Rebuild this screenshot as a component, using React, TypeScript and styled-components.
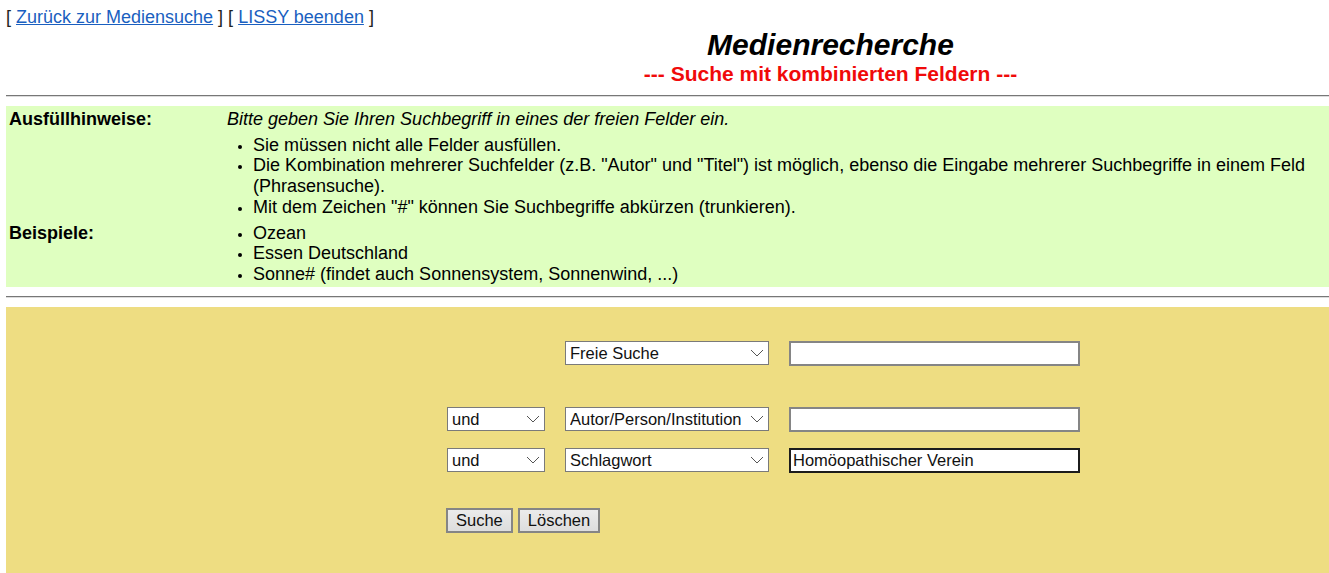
import React from "react";
import styled, { createGlobalStyle } from "styled-components";

const Global = createGlobalStyle`
  html, body { background: #ffffff; }
  body {
    margin: 7px 0 0 6px;
    font-family: "Liberation Sans", Arial, sans-serif;
    font-size: 18px;
    color: #000;
  }
`;

const Page = styled.div`
  display: flex;
  flex-direction: column;
`;

const TopLinks = styled.div`
  line-height: 21px;
  color: #222;
`;

const Link = styled.a`
  color: #1a5fc0;
  text-decoration: underline;
`;

const TitleBlock = styled.div`
  margin-left: 326px;
  text-align: center;
  display: flex;
  flex-direction: column;
  align-items: center;
`;

const Title = styled.h1`
  margin: 0;
  font-size: 30px;
  font-weight: bold;
  font-style: italic;
  line-height: 34px;
`;

const Subtitle = styled.h2`
  margin: 0;
  font-size: 21px;
  font-weight: bold;
  color: #f00a0a;
  line-height: 24px;
`;

const Rule = styled.div<{ $top: number; $bottom: number }>`
  height: 0;
  border-top: 1px solid #777;
  border-bottom: 1px solid #dcdcdc;
  margin: ${(p) => `${p.$top}px 0 ${p.$bottom}px`};
`;

const HintBox = styled.div`
  background: #dfffc0;
  display: grid;
  grid-template-columns: 218px 1fr;
  line-height: 20.7px;
`;

const Cell = styled.div<{ $pb?: number; $pt?: number }>`
  padding: ${(p) => p.$pt ?? 3}px 3px ${(p) => p.$pb ?? 3}px;
`;

const Label = styled(Cell)`
  font-weight: bold;
`;

const Italic = styled.div`
  font-style: italic;
`;

const List = styled.ul<{ $mt: number }>`
  margin: ${(p) => p.$mt}px 0 0 0;
  padding-left: 26px;
  li::marker {
    font-size: 13px;
  }
`;

const FormBox = styled.div`
  background: #eedd82;
  padding: 34px 0 60px 440px;
  display: flex;
  flex-direction: column;
`;

const FormRow = styled.div<{ $mt: number }>`
  display: grid;
  grid-template-columns: 98px 204px 291px;
  column-gap: 20px;
  align-items: center;
  margin-top: ${(p) => p.$mt}px;
  margin-left: 1px;
`;

const SelectWrap = styled.div`
  position: relative;
  height: 24px;
`;

const Select = styled.select`
  appearance: none;
  -webkit-appearance: none;
  width: 100%;
  height: 24px;
  box-sizing: border-box;
  border: 1px solid #7a7a7a;
  background: #fff;
  font-family: "Liberation Sans", Arial, sans-serif;
  font-size: 16.5px;
  color: #111;
  padding: 0 20px 0 4px;
  border-radius: 0;
  margin: 0;
`;

const Chevron = styled.svg`
  position: absolute;
  right: 5px;
  top: 8px;
  pointer-events: none;
`;

const TextInput = styled.input<{ $active?: boolean }>`
  width: 291px;
  height: 25px;
  box-sizing: border-box;
  margin: 0;
  border: 2px solid ${(p) => (p.$active ? "#1c1c1c" : "#858585")};
  background: #fff;
  font-family: "Liberation Sans", Arial, sans-serif;
  font-size: 16.5px;
  color: #111;
  padding: 0 2px;
  outline: none;
`;

const ButtonRow = styled.div`
  display: flex;
  gap: 5px;
  margin-top: 35px;
`;

const Button = styled.button`
  height: 25px;
  box-sizing: border-box;
  border: 2px solid #858585;
  background: linear-gradient(#ebebeb, #dddddd);
  font-family: "Liberation Sans", Arial, sans-serif;
  font-size: 16.5px;
  color: #111;
  padding: 0 8px;
  margin: 0;
`;

const Arrow = () => (
  <Chevron width="14" height="8" viewBox="0 0 14 8">
    <path d="M1 1 L7 7 L13 1" fill="none" stroke="#555" strokeWidth="1" />
  </Chevron>
);

const Sel = ({ value, options }: { value: string; options: string[] }) => (
  <SelectWrap>
    <Select defaultValue={value}>
      {options.map((o) => (
        <option key={o}>{o}</option>
      ))}
    </Select>
    <Arrow />
  </SelectWrap>
);

const fields = ["Freie Suche", "Autor/Person/Institution", "Titel", "Schlagwort"];
const ops = ["und", "oder", "nicht"];

export default function App() {
  return (
    <>
      <Global />
      <Page>
        <TopLinks>
          [ <Link href="#">Zurück zur Mediensuche</Link> ] [ <Link href="#">LISSY beenden</Link> ]
        </TopLinks>
        <TitleBlock>
          <Title>Medienrecherche</Title>
          <Subtitle>--- Suche mit kombinierten Feldern ---</Subtitle>
        </TitleBlock>
        <Rule $top={9} $bottom={9} />
        <HintBox>
          <Label>Ausfüllhinweise:</Label>
          <Cell>
            <Italic>Bitte geben Sie Ihren Suchbegriff in eines der freien Felder ein.</Italic>
            <List $mt={5}>
              <li>Sie müssen nicht alle Felder ausfüllen.</li>
              <li>
                Die Kombination mehrerer Suchfelder (z.B. "Autor" und "Titel") ist möglich, ebenso die
                Eingabe mehrerer Suchbegriffe in einem Feld (Phrasensuche).
              </li>
              <li>Mit dem Zeichen "#" können Sie Suchbegriffe abkürzen (trunkieren).</li>
            </List>
          </Cell>
          <Label $pt={2} $pb={2}>Beispiele:</Label>
          <Cell $pt={2} $pb={2}>
            <List $mt={0}>
              <li>Ozean</li>
              <li>Essen Deutschland</li>
              <li>Sonne# (findet auch Sonnensystem, Sonnenwind, ...)</li>
            </List>
          </Cell>
        </HintBox>
        <Rule $top={9} $bottom={9} />
        <FormBox>
          <FormRow $mt={0}>
            <div />
            <Sel value="Freie Suche" options={fields} />
            <TextInput />
          </FormRow>
          <FormRow $mt={41}>
            <Sel value="und" options={ops} />
            <Sel value="Autor/Person/Institution" options={fields} />
            <TextInput />
          </FormRow>
          <FormRow $mt={16}>
            <Sel value="und" options={ops} />
            <Sel value="Schlagwort" options={fields} />
            <TextInput $active defaultValue="Homöopathischer Verein" />
          </FormRow>
          <ButtonRow>
            <Button>Suche</Button>
            <Button>Löschen</Button>
          </ButtonRow>
        </FormBox>
      </Page>
    </>
  );
}
